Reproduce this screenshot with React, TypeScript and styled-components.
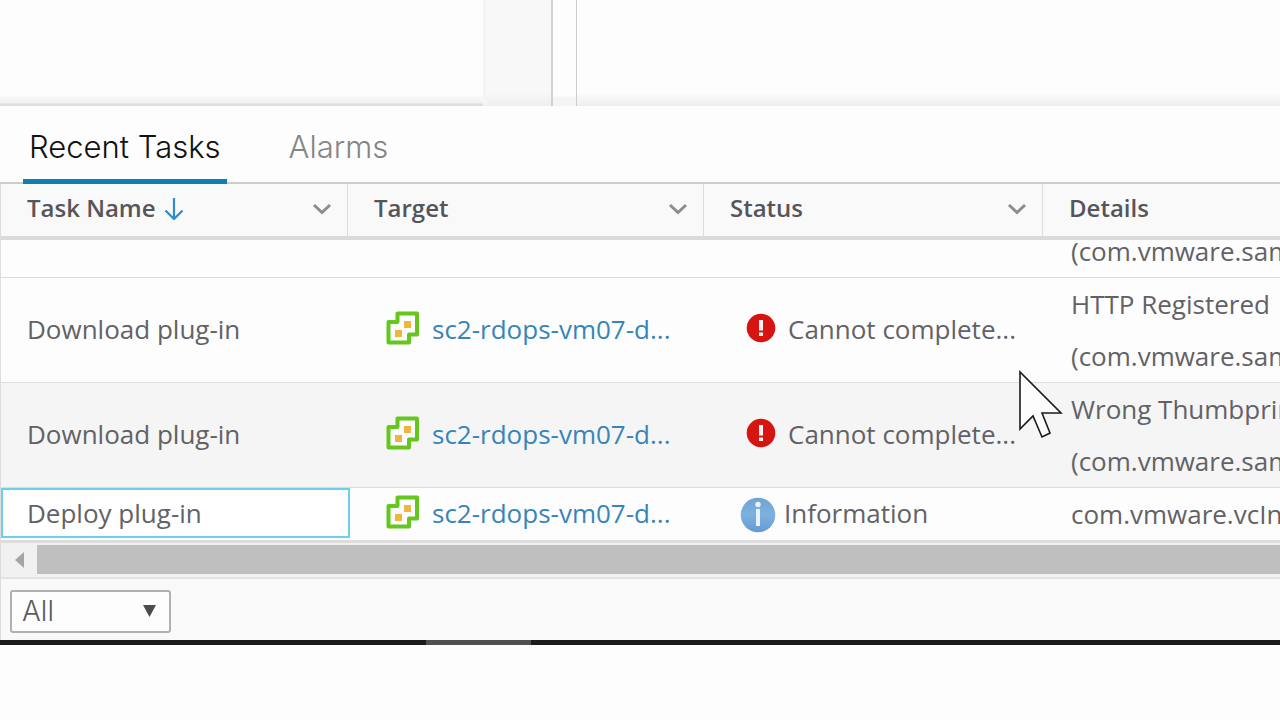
import React, { useLayoutEffect, useRef, useState } from "react";
import styled, { createGlobalStyle } from "styled-components";

const GlobalStyle = createGlobalStyle`
  *, *::before, *::after { box-sizing: border-box; }
  body {
    margin: 0;
    background: #fdfdfd;
    color: #626266;
    font-family: "Open Sans", "Noto Sans", sans-serif;
    font-size: 26px;
    overflow: hidden;
  }
`;

const Page = styled.div`
  display: flex;
  flex-direction: column;
`;

/* Bottom edge of the workspace above the task panel */
const Workspace = styled.div`
  display: flex;
  height: 106px;
`;

const NavigatorPane = styled.div`
  width: 486px;
  background: linear-gradient(to bottom, #fdfdfd 94px, #f0f0f0 103px, #dedede 104px);
  border-right: 3px solid #f4f4f4;
`;

const NavigatorGutter = styled.div`
  width: 67px;
  background: linear-gradient(to bottom, #f8f8f8 92px, #f0f0f0 104px);
  border-right: 2px solid #d2d2d2;
`;

const Splitter = styled.div`
  width: 24px;
  background: linear-gradient(to bottom, #fdfdfd 96px, #f4f4f4 97px);
  border-right: 1px solid #cccccc;
`;

const ContentPane = styled.div`
  flex: 1;
  background: linear-gradient(to bottom, #fdfdfd 92px, #efefef 105px);
`;

const TabBar = styled.div`
  display: flex;
  gap: 56px;
  height: 78px;
  padding-left: 23px;
  border-bottom: 2px solid #cdcdcd;
`;

const Tab = styled.button<{ $active?: boolean }>`
  height: 79px;
  padding: 8px 6px 0;
  border: 0;
  border-bottom: 6px solid ${(p) => (p.$active ? "#127eb0" : "transparent")};
  background: none;
  color: ${(p) => (p.$active ? "#111111" : "#858585")};
  font: 300 31px/40px Inter, sans-serif;
  white-space: nowrap;
`;

const TaskPanel = styled.section`
  border-left: 1px solid #dddddd;
  background: #fdfdfd;
`;

const GridViewport = styled.div`
  height: 357px;
  overflow: hidden;
`;

const Table = styled.table`
  width: 100%;
  table-layout: fixed;
  border-collapse: separate;
  border-spacing: 0;
`;

const Column = styled.col<{ $width?: number }>`
  width: ${(p) => (p.$width ? `${p.$width}px` : "auto")};
`;

const HeaderCell = styled.th`
  position: sticky;
  top: 0;
  z-index: 1;
  height: 56px;
  padding: 0 15px 4px 26px;
  border-right: 1px solid #dddddd;
  border-bottom: 4px solid #dadada;
  background: #f9f9f9;
  color: #55555a;
  font-size: 24px;
  font-weight: 600;
  line-height: 32px;
  text-align: left;

  &:last-child {
    border-right: 0;
  }
`;

const HeaderContent = styled.div`
  display: flex;
  align-items: center;
  gap: 8px;
`;

const FilterButton = styled.button`
  display: flex;
  margin-left: auto;
  padding: 2px 0 0;
  border: 0;
  background: none;
`;

const BodyRow = styled.tr<{ $striped?: boolean }>`
  background: ${(p) => (p.$striped ? "#f5f5f5" : "#fdfdfd")};
`;

const Cell = styled.td`
  height: 53px;
  padding: 0 0 2px 26px;
  border-bottom: 1px solid #dddddd;
  line-height: 50px;
  white-space: nowrap;
  overflow: hidden;
`;

const DetailsCell = styled(Cell)`
  padding: 0 0 0 28px;
  line-height: 52px;
`;

const FocusCell = styled(Cell)`
  padding: 0 0 2px;
  overflow: visible;
`;

const FocusRing = styled.div`
  height: 50px;
  margin-right: -2px;
  padding-left: 24px;
  border: 2px solid #6bd0ea;
  background: #ffffff;
  line-height: 46px;
`;

const IconText = styled.div<{ $inset: number; $gap: number }>`
  display: flex;
  align-items: center;
  gap: ${(p) => p.$gap}px;
  padding-left: ${(p) => p.$inset}px;
`;

const RaisedIcon = styled.svg`
  margin-bottom: 2px;
`;

const LoweredIcon = styled.svg`
  margin-top: 4px;
`;

const TargetLink = styled.a`
  color: #3785b8;
  text-decoration: none;
`;

const ScrollTrack = styled.div`
  display: flex;
  height: 38px;
  padding: 2px 0 3px;
  border-top: 2px solid #dedede;
  border-bottom: 2px solid #e2e2e2;
  background: #f1f1f1;
`;

const ScrollButton = styled.button`
  display: flex;
  align-items: center;
  justify-content: flex-end;
  width: 36px;
  padding: 0 13px 0 0;
  border: 0;
  background: none;
`;

const ScrollThumb = styled.div`
  flex: 1;
  background: #bfbfbf;
`;

const Footer = styled.footer`
  display: flex;
  align-items: center;
  height: 61px;
  padding: 3px 9px 0;
  background: #f9f9fa;
`;

const SelectWrap = styled.label`
  display: grid;
  grid-template-columns: 161px;
  align-items: center;
`;

const FilterSelect = styled.select`
  grid-area: 1 / 1;
  height: 43px;
  padding: 0 10px;
  border: 2px solid #b0b0b0;
  border-radius: 3px;
  background: #fdfdfd;
  color: #5c5c5c;
  font: 300 28px/36px Inter, sans-serif;
  appearance: none;
`;

const SelectArrow = styled.svg`
  grid-area: 1 / 1;
  justify-self: end;
  margin-right: 15px;
  pointer-events: none;
`;

const TaskbarEdge = styled.div`
  display: flex;
  height: 5px;
  padding-left: 426px;
  background: #1c1c1c;
`;

const TaskbarItem = styled.div`
  width: 105px;
  background: #505050;
`;

const Pointer = styled.svg`
  position: absolute;
  left: 1017px;
  top: 369px;
  z-index: 2;
  pointer-events: none;
`;

const SortIcon = () => (
  <svg width="20" height="24" viewBox="0 0 20 24" fill="none" stroke="#2e8ccc" strokeWidth="2.2" aria-hidden="true">
    <path d="M10 2V23M1.500 14.500L10 23L18.500 14.500" />
  </svg>
);

const ChevronIcon = () => (
  <svg width="20" height="14" viewBox="0 0 20 14" fill="none" stroke="#8c8c8c" strokeWidth="3" aria-hidden="true">
    <path d="M2 3L10 10.500L18 3" />
  </svg>
);

const VCenterIcon = () => (
  <RaisedIcon width="34" height="34" viewBox="0 0 34 34" aria-hidden="true">
    <path d="M11.500 2.500H31V23.500H23V31.500H2.500V11H11.500Z" fill="#fdfdfd" stroke="#65c71d" strokeWidth="4" strokeLinejoin="round" />
    <rect x="18" y="10" width="7" height="7" fill="#f0b53c" />
    <rect x="9" y="19" width="7" height="7" fill="#f0b53c" />
  </RaisedIcon>
);

const ErrorIcon = () => (
  <RaisedIcon width="30" height="30" viewBox="0 0 30 30" aria-hidden="true">
    <circle cx="15" cy="15" r="14.300" fill="#d61510" />
    <rect x="13" y="7" width="4" height="10.500" fill="#fdf3f2" />
    <rect x="13" y="19.500" width="4" height="3.500" fill="#fdf3f2" />
  </RaisedIcon>
);

const InfoIcon = () => (
  <LoweredIcon width="36" height="36" viewBox="0 0 36 36" aria-hidden="true">
    <defs>
      <linearGradient id="info-fill" x1="0" y1="0" x2="0" y2="1">
        <stop offset="0" stopColor="#6fa3d0" />
        <stop offset="0.5" stopColor="#7db1df" />
        <stop offset="1" stopColor="#639bd0" />
      </linearGradient>
    </defs>
    <circle cx="18" cy="18" r="17.300" fill="url(#info-fill)" />
    <circle cx="18" cy="7.500" r="2.700" fill="#e9f3fb" />
    <rect x="16" y="12" width="4" height="17" fill="#e9f3fb" />
  </LoweredIcon>
);

type Task = {
  name: string;
  status: string;
  kind: "error" | "info";
  details: string[];
  striped?: boolean;
};

const tasks: Task[] = [
  { name: "Download plug-in", status: "Cannot complete...", kind: "error", details: ["HTTP Registered", "(com.vmware.sam"] },
  { name: "Download plug-in", status: "Cannot complete...", kind: "error", details: ["HTTP Registered", "(com.vmware.sam"] },
  { name: "Download plug-in", status: "Cannot complete...", kind: "error", details: ["Wrong Thumbprin", "(com.vmware.sam"], striped: true },
  { name: "Deploy plug-in", status: "Information", kind: "info", details: ["com.vmware.vcInt"] },
];

const columns = ["Task Name", "Target", "Status", "Details"];

function TaskDetails({ lines }: { lines: string[] }) {
  return (
    <DetailsCell>
      {lines.map((line, i) => (
        <React.Fragment key={i}>
          {i > 0 && <br />}
          {line}
        </React.Fragment>
      ))}
    </DetailsCell>
  );
}

function TaskRow({ task, scrolledOff }: { task: Task; scrolledOff: boolean }) {
  if (scrolledOff) {
    return (
      <BodyRow>
        <Cell />
        <Cell />
        <Cell />
        <TaskDetails lines={["\u00a0", task.details[1]]} />
      </BodyRow>
    );
  }
  return (
    <BodyRow $striped={task.striped}>
      {task.kind === "info" ? (
        <FocusCell>
          <FocusRing tabIndex={0}>{task.name}</FocusRing>
        </FocusCell>
      ) : (
        <Cell>{task.name}</Cell>
      )}
      <Cell>
        <IconText $inset={12} $gap={12}>
          <VCenterIcon />
          <TargetLink href="#target">sc2-rdops-vm07-d...</TargetLink>
        </IconText>
      </Cell>
      <Cell>
        {task.kind === "info" ? (
          <IconText $inset={10} $gap={8}>
            <InfoIcon />
            {task.status}
          </IconText>
        ) : (
          <IconText $inset={16} $gap={12}>
            <ErrorIcon />
            {task.status}
          </IconText>
        )}
      </Cell>
      <TaskDetails lines={task.details} />
    </BodyRow>
  );
}

export default function App() {
  const viewport = useRef<HTMLDivElement>(null);
  const [filter, setFilter] = useState("All");

  useLayoutEffect(() => {
    const el = viewport.current;
    if (el) el.scrollTop = el.scrollHeight;
  }, []);

  return (
    <Page>
      <GlobalStyle />
      <Workspace>
        <NavigatorPane />
        <NavigatorGutter />
        <Splitter />
        <ContentPane />
      </Workspace>
      <TabBar role="tablist">
        <Tab role="tab" aria-selected="true" $active>Recent Tasks</Tab>
        <Tab role="tab" aria-selected="false">Alarms</Tab>
      </TabBar>
      <TaskPanel>
        <GridViewport ref={viewport}>
          <Table>
            <colgroup>
              <Column $width={347} />
              <Column $width={356} />
              <Column $width={339} />
              <Column />
            </colgroup>
            <thead>
              <tr>
                {columns.map((title) => (
                  <HeaderCell key={title} scope="col">
                    <HeaderContent>
                      {title}
                      {title === "Task Name" && <SortIcon />}
                      {title !== "Details" && (
                        <FilterButton aria-label={`Filter ${title}`}>
                          <ChevronIcon />
                        </FilterButton>
                      )}
                    </HeaderContent>
                  </HeaderCell>
                ))}
              </tr>
            </thead>
            <tbody>
              {tasks.map((task, i) => (
                <TaskRow key={i} task={task} scrolledOff={i === 0} />
              ))}
            </tbody>
          </Table>
        </GridViewport>
        <ScrollTrack>
          <ScrollButton aria-label="Scroll left">
            <svg width="9" height="16" viewBox="0 0 9 16" aria-hidden="true">
              <path d="M9 0V16L0 8Z" fill="#a6a6a6" />
            </svg>
          </ScrollButton>
          <ScrollThumb />
        </ScrollTrack>
        <Footer>
          <SelectWrap>
            <FilterSelect aria-label="Task filter" value={filter} onChange={(e) => setFilter(e.target.value)}>
              <option>All</option>
            </FilterSelect>
            <SelectArrow width="13" height="13" viewBox="0 0 13 13" aria-hidden="true">
              <path d="M0 0H13L6.500 12Z" fill="#4c4c4c" />
            </SelectArrow>
          </SelectWrap>
        </Footer>
      </TaskPanel>
      <TaskbarEdge>
        <TaskbarItem />
      </TaskbarEdge>
      <Pointer width="48" height="72" viewBox="0 0 48 72" aria-hidden="true">
        <path d="M3 3V60L16 47L25 68L33 64L25 44H44Z" fill="#fdfdfd" stroke="#1a1a1a" strokeWidth="1.600" />
      </Pointer>
    </Page>
  );
}
